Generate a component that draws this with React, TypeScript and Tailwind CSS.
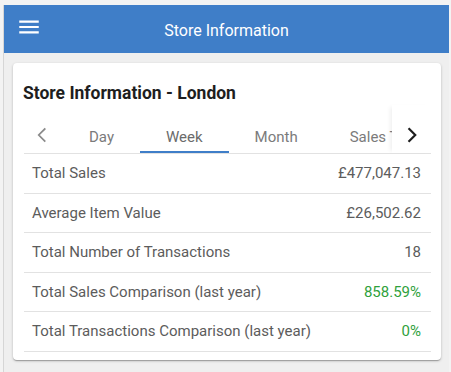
import React from "react";

const rows: { label: string; value: string; green?: boolean }[] = [
  { label: "Total Sales", value: "£477,047.13" },
  { label: "Average Item Value", value: "£26,502.62" },
  { label: "Total Number of Transactions", value: "18" },
  { label: "Total Sales Comparison (last year)", value: "858.59%", green: true },
  { label: "Total Transactions Comparison (last year)", value: "0%", green: true },
];

const tabs = ["Day", "Week", "Month", "Sales Trend"];

export default function App() {
  return (
    <div
      className="w-[451px] h-[372px] bg-[#f3f3f3] pt-[5px] overflow-hidden"
      style={{ fontFamily: "Roboto, 'Noto Sans', sans-serif" }}
    >
      <div className="ml-[3px] w-[446px] h-[367px] border-l border-[#d6d6d6] bg-[#efefef]">
        <header className="h-[48px] bg-[#3f7ec8] grid grid-cols-[1fr_auto_1fr] items-center">
          <div className="pl-[12px] flex items-center -mt-[4px]">
            <svg width="26" height="26" viewBox="0 0 24 24" fill="#ffffff">
              <path d="M3 18h18v-2H3v2zm0-5h18v-2H3v2zm0-7v2h18V6H3z" />
            </svg>
          </div>
          <div className="text-white text-[16px] leading-[24px] mt-[4px]">Store Information</div>
          <div />
        </header>
        <div className="ml-[9px] mr-[8px] mt-[10px] h-[297px] bg-white rounded-[4px] shadow-[0_1px_3px_rgba(0,0,0,0.2),0_1px_1px_rgba(0,0,0,0.14),0_2px_1px_-1px_rgba(0,0,0,0.12)] pt-[18px]">
          <div className="pl-[10px] text-[17.5px] leading-[24px] font-bold text-[#1e1e1e]">
            Store Information - London
          </div>
          <div className="pl-[11px] pr-[10px]">
            <div className="flex h-[49px] border-b border-[#e2e2e2] relative">
              <div className="w-[39px] shrink-0 flex items-end justify-center pb-[5px] pr-[4px]">
                <svg width="26" height="26" viewBox="0 0 24 24" fill="none" stroke="#8a8a8a" strokeWidth="1.6" strokeLinecap="square">
                  <path d="M14.5 6.5L9 12l5.5 5.5" />
                </svg>
              </div>
              <div className="flex-1 flex overflow-hidden">
                {tabs.map((t) => (
                  <div
                    key={t}
                    className={`relative shrink-0 px-[26px] flex items-end pb-[6px] text-[15px] leading-[20px] whitespace-nowrap ${
                      t === "Week" ? "text-[#6b6b6b]" : "text-[#7b7b7b]"
                    }`}
                  >
                    {t}
                    {t === "Week" && (
                      <div className="absolute left-0 right-0 bottom-0 h-[2px] bg-[#3f7ec8]" />
                    )}
                  </div>
                ))}
              </div>
              <div className="w-[39px] shrink-0 bg-white flex items-end justify-center pb-[5px] shadow-[-4px_0_4px_-2px_rgba(0,0,0,0.06)]">
                <svg width="26" height="26" viewBox="0 0 24 24" fill="none" stroke="#1e1e1e" strokeWidth="2" strokeLinecap="square">
                  <path d="M9.5 6.5L15 12l-5.5 5.5" />
                </svg>
              </div>
            </div>
            {rows.map((r) => (
              <div
                key={r.label}
                className="h-[39.5px] border-b border-[#e2e2e2] flex items-center justify-between pl-[8px] pr-[10px] text-[15px] leading-[20px]"
              >
                <span className="text-[#5c5c5c]">{r.label}</span>
                <span className={r.green ? "text-[#2fa13c]" : "text-[#5c5c5c]"}>{r.value}</span>
              </div>
            ))}
          </div>
        </div>
      </div>
    </div>
  );
}
